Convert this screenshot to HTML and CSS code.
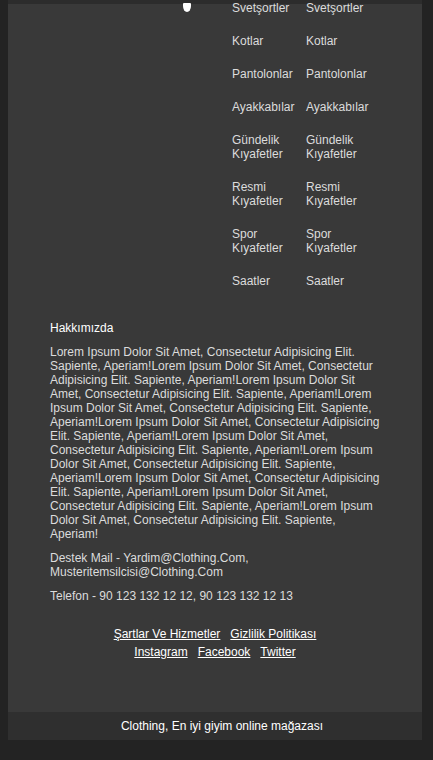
FILE: index.html
```html
<!DOCTYPE html>
<html lang="tr">
<head>
<meta charset="utf-8">
<title>Clothing</title>
<link rel="stylesheet" href="styles.css">
</head>
<body>
<div class="page">
  <div class="top">
    <span class="blob"></span>
    <ul class="cat">
      <li>Svetşortler</li>
      <li>Kotlar</li>
      <li>Pantolonlar</li>
      <li>Ayakkabılar</li>
      <li>Gündelik Kıyafetler</li>
      <li>Resmi Kıyafetler</li>
      <li>Spor Kıyafetler</li>
      <li>Saatler</li>
    </ul>
    <ul class="cat">
      <li>Svetşortler</li>
      <li>Kotlar</li>
      <li>Pantolonlar</li>
      <li>Ayakkabılar</li>
      <li>Gündelik Kıyafetler</li>
      <li>Resmi Kıyafetler</li>
      <li>Spor Kıyafetler</li>
      <li>Saatler</li>
    </ul>
  </div>
  <div class="about">
    <h4 class="about-title">Hakkımızda</h4>
    <p class="about-text">Lorem Ipsum Dolor Sit Amet, Consectetur Adipisicing Elit. Sapiente, Aperiam!Lorem Ipsum Dolor Sit Amet, Consectetur Adipisicing Elit. Sapiente, Aperiam!Lorem Ipsum Dolor Sit Amet, Consectetur Adipisicing Elit. Sapiente, Aperiam!Lorem Ipsum Dolor Sit Amet, Consectetur Adipisicing Elit. Sapiente, Aperiam!Lorem Ipsum Dolor Sit Amet, Consectetur Adipisicing Elit. Sapiente, Aperiam!Lorem Ipsum Dolor Sit Amet, Consectetur Adipisicing Elit. Sapiente, Aperiam!Lorem Ipsum Dolor Sit Amet, Consectetur Adipisicing Elit. Sapiente, Aperiam!Lorem Ipsum Dolor Sit Amet, Consectetur Adipisicing Elit. Sapiente, Aperiam!Lorem Ipsum Dolor Sit Amet, Consectetur Adipisicing Elit. Sapiente, Aperiam!Lorem Ipsum Dolor Sit Amet, Consectetur Adipisicing Elit. Sapiente, Aperiam!</p>
    <p class="about-text">Destek Mail - Yardim@Clothing.Com, Musteritemsilcisi@Clothing.Com</p>
    <p class="about-text">Telefon - 90 123 132 12 12, 90 123 132 12 13</p>
  </div>
  <div class="links">
    <div class="link-row">
      <a href="#">Şartlar Ve Hizmetler</a>
      <a href="#">Gizlilik Politikası</a>
    </div>
    <div class="link-row">
      <a href="#">Instagram</a>
      <a href="#">Facebook</a>
      <a href="#">Twitter</a>
    </div>
  </div>
  <div class="copyright">Clothing, En iyi giyim online mağazası</div>
</div>
</body>
</html>
```

FILE: styles.css
```css
html {
  overflow: hidden;
}

body {
  margin: 0;
  padding: 0 0 20px 0;
  background: #232323;
  font-family: "Liberation Sans", Arial, sans-serif;
  font-size: 12px;
  line-height: 14px;
  color: #dcdcdc;
}

.page {
  width: 414px;
  margin-left: 8px;
  background: linear-gradient(to bottom, #2c2c2c 0, #2c2c2c 4px, #393939 4px);
}

.top {
  display: flex;
  padding-left: 175px;
  padding-top: 1px;
}

.blob {
  width: 8px;
  height: 9px;
  margin-top: 2px;
  margin-right: 41px;
  background: #fff;
  border-radius: 1px 1px 4px 4px / 1px 1px 6px 6px;
}

.cat {
  list-style: none;
  margin: 0 8px 0 0;
  padding: 0;
  width: 66px;
  display: flex;
  flex-direction: column;
  gap: 19px;
}

.about {
  padding: 33px 42px 0 42px;
}

.about-title {
  margin: 0 0 10px 0;
  font-size: 12px;
  font-weight: normal;
  color: #fff;
}

.about-text {
  margin: 0 0 10px 0;
}

.links {
  padding: 14px 0 53px 0;
  display: flex;
  flex-direction: column;
  gap: 4px;
}

.link-row {
  display: flex;
  justify-content: center;
  gap: 10px;
}

.link-row a {
  color: #fff;
  text-decoration: underline;
}

.copyright {
  height: 28px;
  line-height: 28px;
  background: #2f2f2f;
  color: #fff;
  text-align: center;
  padding-left: 14px;
}
```
